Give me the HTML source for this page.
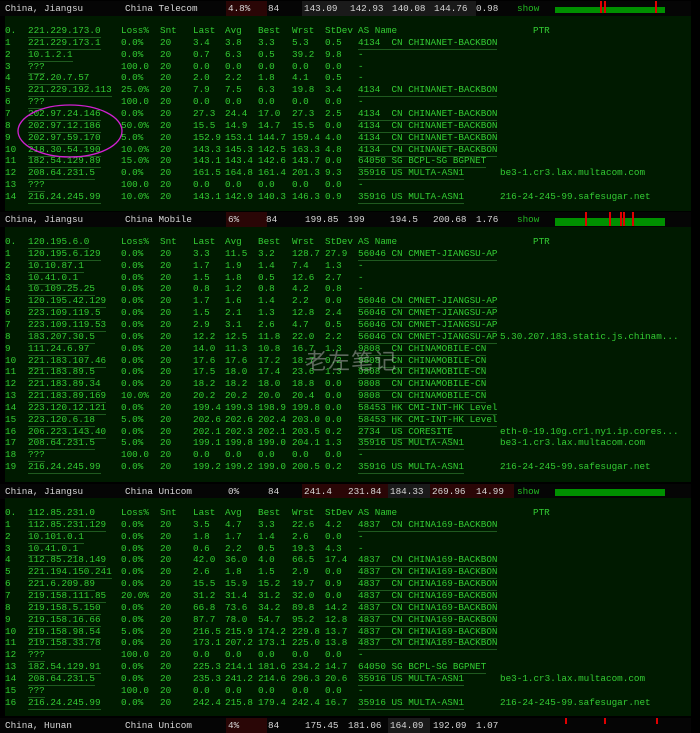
<!DOCTYPE html><html><head><meta charset="utf-8"><style>
body{margin:0;background:#000;width:700px;height:724px;overflow:hidden;position:relative;font-family:"Liberation Mono",monospace;font-size:9.3px;}
.hd{position:absolute;left:0;width:691px;height:15px;background:#050505;color:#d8d8d8;}
.hd span{position:absolute;top:0;line-height:15px;height:15px;padding-left:2px;}
.panel{position:absolute;left:5px;width:686px;background:#001a00;}
.r{position:absolute;left:0;height:12px;line-height:12px;color:#33cc33;white-space:pre;width:686px}
.r span{position:absolute;top:0}
.a{left:0}.b{left:23px}.c{left:116px}.d{left:155px}.e{left:188px}.f{left:220px}.g{left:253px}.h{left:287px}.i{left:320px}.j{left:353px}.k{left:495px}.kh{left:528px}
.u{border-bottom:1px solid #1f5a1f}
.bar{position:absolute;background:#009000;height:8px}
.tk{position:absolute;width:2px;background:#e00000}
.red{background:#2a0606}.gr{background:#1a1a1a}
</style></head><body>

<div class="hd" style="top:1px">
<span style="left:3px">China, Jiangsu</span><span style="left:123px">China Telecom</span>
<span class="red" style="left:226px;width:39px">4.8%</span><span style="left:266px">84</span>
<span class="gr" style="left:302px;width:172px">143.09</span><span style="left:348px">142.93</span><span style="left:390px">140.08</span><span style="left:432px">144.76</span>
<span style="left:474px">0.98</span><span style="left:515px;color:#22bb22">show</span>
</div>
<div class="bar" style="left:555px;top:7px;width:110px;height:6px"></div>
<div class="tk" style="left:600px;top:1px;height:12px"></div><div class="tk" style="left:604px;top:1px;height:12px"></div><div class="tk" style="left:655px;top:1px;height:12px"></div>

<div class="panel" style="top:16px;height:195px">
<div class="r" style="top:9px"><span class="a">0.</span><span class="b u">221.229.173.0</span><span class="c">Loss%</span><span class="d">Snt</span><span class="e">Last</span><span class="f">Avg</span><span class="g">Best</span><span class="h">Wrst</span><span class="i">StDev</span><span class="j">AS Name</span><span class="kh">PTR</span></div>
<div class="r" style="top:20.85px"><span class="a">1</span><span class="b u">221.229.173.1</span><span class="c">0.0%</span><span class="d">20</span><span class="e">3.4</span><span class="f">3.8</span><span class="g">3.3</span><span class="h">5.3</span><span class="i">0.5</span><span class="j u">4134  CN CHINANET-BACKBON</span></div>
<div class="r" style="top:32.7px"><span class="a">2</span><span class="b u">10.1.2.1</span><span class="c">0.0%</span><span class="d">20</span><span class="e">0.7</span><span class="f">6.3</span><span class="g">0.5</span><span class="h">39.2</span><span class="i">9.8</span><span class="j">-</span></div>
<div class="r" style="top:44.55px"><span class="a">3</span><span class="b u">???</span><span class="c">100.0</span><span class="d">20</span><span class="e">0.0</span><span class="f">0.0</span><span class="g">0.0</span><span class="h">0.0</span><span class="i">0.0</span><span class="j">-</span></div>
<div class="r" style="top:56.4px"><span class="a">4</span><span class="b u">172.20.7.57</span><span class="c">0.0%</span><span class="d">20</span><span class="e">2.0</span><span class="f">2.2</span><span class="g">1.8</span><span class="h">4.1</span><span class="i">0.5</span><span class="j">-</span></div>
<div class="r" style="top:68.25px"><span class="a">5</span><span class="b u">221.229.192.113</span><span class="c">25.0%</span><span class="d">20</span><span class="e">7.9</span><span class="f">7.5</span><span class="g">6.3</span><span class="h">19.8</span><span class="i">3.4</span><span class="j u">4134  CN CHINANET-BACKBON</span></div>
<div class="r" style="top:80.1px"><span class="a">6</span><span class="b u">???</span><span class="c">100.0</span><span class="d">20</span><span class="e">0.0</span><span class="f">0.0</span><span class="g">0.0</span><span class="h">0.0</span><span class="i">0.0</span><span class="j">-</span></div>
<div class="r" style="top:91.95px"><span class="a">7</span><span class="b u">202.97.24.146</span><span class="c">0.0%</span><span class="d">20</span><span class="e">27.3</span><span class="f">24.4</span><span class="g">17.0</span><span class="h">27.3</span><span class="i">2.5</span><span class="j u">4134  CN CHINANET-BACKBON</span></div>
<div class="r" style="top:103.8px"><span class="a">8</span><span class="b u">202.97.12.186</span><span class="c">50.0%</span><span class="d">20</span><span class="e">15.5</span><span class="f">14.9</span><span class="g">14.7</span><span class="h">15.5</span><span class="i">0.0</span><span class="j u">4134  CN CHINANET-BACKBON</span></div>
<div class="r" style="top:115.65px"><span class="a">9</span><span class="b u">202.97.59.170</span><span class="c">5.0%</span><span class="d">20</span><span class="e">152.9</span><span class="f">153.1</span><span class="g">144.7</span><span class="h">159.4</span><span class="i">4.0</span><span class="j u">4134  CN CHINANET-BACKBON</span></div>
<div class="r" style="top:127.5px"><span class="a">10</span><span class="b u">218.30.54.190</span><span class="c">10.0%</span><span class="d">20</span><span class="e">143.3</span><span class="f">145.3</span><span class="g">142.5</span><span class="h">163.3</span><span class="i">4.8</span><span class="j u">4134  CN CHINANET-BACKBON</span></div>
<div class="r" style="top:139.35px"><span class="a">11</span><span class="b u">182.54.129.89</span><span class="c">15.0%</span><span class="d">20</span><span class="e">143.1</span><span class="f">143.4</span><span class="g">142.6</span><span class="h">143.7</span><span class="i">0.0</span><span class="j u">64050 SG BCPL-SG BGPNET</span></div>
<div class="r" style="top:151.2px"><span class="a">12</span><span class="b u">208.64.231.5</span><span class="c">0.0%</span><span class="d">20</span><span class="e">161.5</span><span class="f">164.8</span><span class="g">161.4</span><span class="h">201.3</span><span class="i">9.3</span><span class="j u">35916 US MULTA-ASN1</span><span class="k">be3-1.cr3.lax.multacom.com</span></div>
<div class="r" style="top:163.05px"><span class="a">13</span><span class="b u">???</span><span class="c">100.0</span><span class="d">20</span><span class="e">0.0</span><span class="f">0.0</span><span class="g">0.0</span><span class="h">0.0</span><span class="i">0.0</span><span class="j">-</span></div>
<div class="r" style="top:174.9px"><span class="a">14</span><span class="b u">216.24.245.99</span><span class="c">10.0%</span><span class="d">20</span><span class="e">143.1</span><span class="f">142.9</span><span class="g">140.3</span><span class="h">146.3</span><span class="i">0.9</span><span class="j u">35916 US MULTA-ASN1</span><span class="k">216-24-245-99.safesugar.net</span></div>
</div>
<svg style="position:absolute;left:0;top:0" width="200" height="200"><ellipse cx="70" cy="131" rx="52" ry="26" fill="none" stroke="#d020d0" stroke-width="1.3"/></svg>

<div class="hd" style="top:212px">
<span style="left:3px">China, Jiangsu</span><span style="left:123px">China Mobile</span>
<span class="red" style="left:226px;width:39px">6%</span><span style="left:264px">84</span>
<span style="left:303px">199.85</span><span style="left:346px">199</span><span style="left:388px">194.5</span><span style="left:431px">200.68</span>
<span style="left:474px">1.76</span><span style="left:515px;color:#22bb22">show</span>
</div>
<div class="bar" style="left:555px;top:218px;width:110px"></div>
<div class="tk" style="left:585px;top:212px;height:14px"></div><div class="tk" style="left:609px;top:212px;height:14px"></div><div class="tk" style="left:620px;top:212px;height:14px"></div><div class="tk" style="left:623px;top:212px;height:14px"></div><div class="tk" style="left:632px;top:212px;height:14px"></div>

<div class="panel" style="top:227px;height:255px">
<div class="r" style="top:9px"><span class="a">0.</span><span class="b u">120.195.6.0</span><span class="c">Loss%</span><span class="d">Snt</span><span class="e">Last</span><span class="f">Avg</span><span class="g">Best</span><span class="h">Wrst</span><span class="i">StDev</span><span class="j">AS Name</span><span class="kh">PTR</span></div>
<div class="r" style="top:20.85px"><span class="a">1</span><span class="b u">120.195.6.129</span><span class="c">0.0%</span><span class="d">20</span><span class="e">3.3</span><span class="f">11.5</span><span class="g">3.2</span><span class="h">128.7</span><span class="i">27.9</span><span class="j u">56046 CN CMNET-JIANGSU-AP</span></div>
<div class="r" style="top:32.7px"><span class="a">2</span><span class="b u">10.10.87.1</span><span class="c">0.0%</span><span class="d">20</span><span class="e">1.7</span><span class="f">1.9</span><span class="g">1.4</span><span class="h">7.4</span><span class="i">1.3</span><span class="j">-</span></div>
<div class="r" style="top:44.55px"><span class="a">3</span><span class="b u">10.41.0.1</span><span class="c">0.0%</span><span class="d">20</span><span class="e">1.5</span><span class="f">1.8</span><span class="g">0.5</span><span class="h">12.6</span><span class="i">2.7</span><span class="j">-</span></div>
<div class="r" style="top:56.4px"><span class="a">4</span><span class="b u">10.109.25.25</span><span class="c">0.0%</span><span class="d">20</span><span class="e">0.8</span><span class="f">1.2</span><span class="g">0.8</span><span class="h">4.2</span><span class="i">0.8</span><span class="j">-</span></div>
<div class="r" style="top:68.25px"><span class="a">5</span><span class="b u">120.195.42.129</span><span class="c">0.0%</span><span class="d">20</span><span class="e">1.7</span><span class="f">1.6</span><span class="g">1.4</span><span class="h">2.2</span><span class="i">0.0</span><span class="j u">56046 CN CMNET-JIANGSU-AP</span></div>
<div class="r" style="top:80.1px"><span class="a">6</span><span class="b u">223.109.119.5</span><span class="c">0.0%</span><span class="d">20</span><span class="e">1.5</span><span class="f">2.1</span><span class="g">1.3</span><span class="h">12.8</span><span class="i">2.4</span><span class="j u">56046 CN CMNET-JIANGSU-AP</span></div>
<div class="r" style="top:91.95px"><span class="a">7</span><span class="b u">223.109.119.53</span><span class="c">0.0%</span><span class="d">20</span><span class="e">2.9</span><span class="f">3.1</span><span class="g">2.6</span><span class="h">4.7</span><span class="i">0.5</span><span class="j u">56046 CN CMNET-JIANGSU-AP</span></div>
<div class="r" style="top:103.8px"><span class="a">8</span><span class="b u">183.207.30.5</span><span class="c">0.0%</span><span class="d">20</span><span class="e">12.2</span><span class="f">12.5</span><span class="g">11.8</span><span class="h">22.0</span><span class="i">2.2</span><span class="j u">56046 CN CMNET-JIANGSU-AP</span><span class="k">5.30.207.183.static.js.chinam...</span></div>
<div class="r" style="top:115.65px"><span class="a">9</span><span class="b u">111.24.6.97</span><span class="c">0.0%</span><span class="d">20</span><span class="e">14.0</span><span class="f">11.3</span><span class="g">10.8</span><span class="h">16.7</span><span class="i">1.3</span><span class="j u">9808  CN CHINAMOBILE-CN</span></div>
<div class="r" style="top:127.5px"><span class="a">10</span><span class="b u">221.183.107.46</span><span class="c">0.0%</span><span class="d">20</span><span class="e">17.6</span><span class="f">17.6</span><span class="g">17.2</span><span class="h">18.7</span><span class="i">0.2</span><span class="j u">9808  CN CHINAMOBILE-CN</span></div>
<div class="r" style="top:139.35px"><span class="a">11</span><span class="b u">221.183.89.5</span><span class="c">0.0%</span><span class="d">20</span><span class="e">17.5</span><span class="f">18.0</span><span class="g">17.4</span><span class="h">23.6</span><span class="i">1.3</span><span class="j u">9808  CN CHINAMOBILE-CN</span></div>
<div class="r" style="top:151.2px"><span class="a">12</span><span class="b u">221.183.89.34</span><span class="c">0.0%</span><span class="d">20</span><span class="e">18.2</span><span class="f">18.2</span><span class="g">18.0</span><span class="h">18.8</span><span class="i">0.0</span><span class="j u">9808  CN CHINAMOBILE-CN</span></div>
<div class="r" style="top:163.05px"><span class="a">13</span><span class="b u">221.183.89.169</span><span class="c">10.0%</span><span class="d">20</span><span class="e">20.2</span><span class="f">20.2</span><span class="g">20.0</span><span class="h">20.4</span><span class="i">0.0</span><span class="j u">9808  CN CHINAMOBILE-CN</span></div>
<div class="r" style="top:174.9px"><span class="a">14</span><span class="b u">223.120.12.121</span><span class="c">0.0%</span><span class="d">20</span><span class="e">199.4</span><span class="f">199.3</span><span class="g">198.9</span><span class="h">199.8</span><span class="i">0.0</span><span class="j u">58453 HK CMI-INT-HK Level</span></div>
<div class="r" style="top:186.75px"><span class="a">15</span><span class="b u">223.120.6.18</span><span class="c">5.0%</span><span class="d">20</span><span class="e">202.6</span><span class="f">202.6</span><span class="g">202.4</span><span class="h">203.0</span><span class="i">0.0</span><span class="j u">58453 HK CMI-INT-HK Level</span></div>
<div class="r" style="top:198.6px"><span class="a">16</span><span class="b u">206.223.143.40</span><span class="c">0.0%</span><span class="d">20</span><span class="e">202.1</span><span class="f">202.3</span><span class="g">202.1</span><span class="h">203.5</span><span class="i">0.2</span><span class="j u">2734  US CORESITE</span><span class="k">eth-0-19.10g.cr1.ny1.ip.cores...</span></div>
<div class="r" style="top:210.45px"><span class="a">17</span><span class="b u">208.64.231.5</span><span class="c">5.0%</span><span class="d">20</span><span class="e">199.1</span><span class="f">199.8</span><span class="g">199.0</span><span class="h">204.1</span><span class="i">1.3</span><span class="j u">35916 US MULTA-ASN1</span><span class="k">be3-1.cr3.lax.multacom.com</span></div>
<div class="r" style="top:222.3px"><span class="a">18</span><span class="b u">???</span><span class="c">100.0</span><span class="d">20</span><span class="e">0.0</span><span class="f">0.0</span><span class="g">0.0</span><span class="h">0.0</span><span class="i">0.0</span><span class="j">-</span></div>
<div class="r" style="top:234.15px"><span class="a">19</span><span class="b u">216.24.245.99</span><span class="c">0.0%</span><span class="d">20</span><span class="e">199.2</span><span class="f">199.2</span><span class="g">199.0</span><span class="h">200.5</span><span class="i">0.2</span><span class="j u">35916 US MULTA-ASN1</span><span class="k">216-24-245-99.safesugar.net</span></div>
</div>
<div style="position:absolute;left:305px;top:344px;font-family:'Noto Sans CJK SC',sans-serif;font-size:22px;color:rgba(170,170,170,0.55);letter-spacing:1px">老左笔记</div>

<div class="hd" style="top:484px">
<span style="left:3px">China, Jiangsu</span><span style="left:123px">China Unicom</span>
<span style="left:226px">0%</span><span style="left:266px">84</span>
<span class="red" style="left:302px;width:84px">241.4</span><span style="left:346px">231.84</span><span class="gr" style="left:388px;width:40px">184.33</span><span class="red" style="left:430px;width:82px">269.96</span>
<span style="left:474px">14.99</span><span style="left:515px;color:#22bb22">show</span>
</div>
<div class="bar" style="left:555px;top:489px;width:110px;height:7px"></div>

<div class="panel" style="top:498px;height:218px">
<div class="r" style="top:9px"><span class="a">0.</span><span class="b u">112.85.231.0</span><span class="c">Loss%</span><span class="d">Snt</span><span class="e">Last</span><span class="f">Avg</span><span class="g">Best</span><span class="h">Wrst</span><span class="i">StDev</span><span class="j">AS Name</span><span class="kh">PTR</span></div>
<div class="r" style="top:20.85px"><span class="a">1</span><span class="b u">112.85.231.129</span><span class="c">0.0%</span><span class="d">20</span><span class="e">3.5</span><span class="f">4.7</span><span class="g">3.3</span><span class="h">22.6</span><span class="i">4.2</span><span class="j u">4837  CN CHINA169-BACKBON</span></div>
<div class="r" style="top:32.7px"><span class="a">2</span><span class="b u">10.101.0.1</span><span class="c">0.0%</span><span class="d">20</span><span class="e">1.8</span><span class="f">1.7</span><span class="g">1.4</span><span class="h">2.6</span><span class="i">0.0</span><span class="j">-</span></div>
<div class="r" style="top:44.55px"><span class="a">3</span><span class="b u">10.41.0.1</span><span class="c">0.0%</span><span class="d">20</span><span class="e">0.6</span><span class="f">2.2</span><span class="g">0.5</span><span class="h">19.3</span><span class="i">4.3</span><span class="j">-</span></div>
<div class="r" style="top:56.4px"><span class="a">4</span><span class="b u">112.85.218.149</span><span class="c">0.0%</span><span class="d">20</span><span class="e">42.0</span><span class="f">36.0</span><span class="g">4.0</span><span class="h">66.5</span><span class="i">17.4</span><span class="j u">4837  CN CHINA169-BACKBON</span></div>
<div class="r" style="top:68.25px"><span class="a">5</span><span class="b u">221.194.150.241</span><span class="c">0.0%</span><span class="d">20</span><span class="e">2.6</span><span class="f">1.8</span><span class="g">1.5</span><span class="h">2.9</span><span class="i">0.0</span><span class="j u">4837  CN CHINA169-BACKBON</span></div>
<div class="r" style="top:80.1px"><span class="a">6</span><span class="b u">221.6.209.89</span><span class="c">0.0%</span><span class="d">20</span><span class="e">15.5</span><span class="f">15.9</span><span class="g">15.2</span><span class="h">19.7</span><span class="i">0.9</span><span class="j u">4837  CN CHINA169-BACKBON</span></div>
<div class="r" style="top:91.95px"><span class="a">7</span><span class="b u">219.158.111.85</span><span class="c">20.0%</span><span class="d">20</span><span class="e">31.2</span><span class="f">31.4</span><span class="g">31.2</span><span class="h">32.0</span><span class="i">0.0</span><span class="j u">4837  CN CHINA169-BACKBON</span></div>
<div class="r" style="top:103.8px"><span class="a">8</span><span class="b u">219.158.5.150</span><span class="c">0.0%</span><span class="d">20</span><span class="e">66.8</span><span class="f">73.6</span><span class="g">34.2</span><span class="h">89.8</span><span class="i">14.2</span><span class="j u">4837  CN CHINA169-BACKBON</span></div>
<div class="r" style="top:115.65px"><span class="a">9</span><span class="b u">219.158.16.66</span><span class="c">0.0%</span><span class="d">20</span><span class="e">87.7</span><span class="f">78.0</span><span class="g">54.7</span><span class="h">95.2</span><span class="i">12.8</span><span class="j u">4837  CN CHINA169-BACKBON</span></div>
<div class="r" style="top:127.5px"><span class="a">10</span><span class="b u">219.158.98.54</span><span class="c">5.0%</span><span class="d">20</span><span class="e">216.5</span><span class="f">215.9</span><span class="g">174.2</span><span class="h">229.8</span><span class="i">13.7</span><span class="j u">4837  CN CHINA169-BACKBON</span></div>
<div class="r" style="top:139.35px"><span class="a">11</span><span class="b u">219.158.33.78</span><span class="c">0.0%</span><span class="d">20</span><span class="e">173.1</span><span class="f">207.2</span><span class="g">173.1</span><span class="h">225.0</span><span class="i">13.8</span><span class="j u">4837  CN CHINA169-BACKBON</span></div>
<div class="r" style="top:151.2px"><span class="a">12</span><span class="b u">???</span><span class="c">100.0</span><span class="d">20</span><span class="e">0.0</span><span class="f">0.0</span><span class="g">0.0</span><span class="h">0.0</span><span class="i">0.0</span><span class="j">-</span></div>
<div class="r" style="top:163.05px"><span class="a">13</span><span class="b u">182.54.129.91</span><span class="c">0.0%</span><span class="d">20</span><span class="e">225.3</span><span class="f">214.1</span><span class="g">181.6</span><span class="h">234.2</span><span class="i">14.7</span><span class="j u">64050 SG BCPL-SG BGPNET</span></div>
<div class="r" style="top:174.9px"><span class="a">14</span><span class="b u">208.64.231.5</span><span class="c">0.0%</span><span class="d">20</span><span class="e">235.3</span><span class="f">241.2</span><span class="g">214.6</span><span class="h">296.3</span><span class="i">20.6</span><span class="j u">35916 US MULTA-ASN1</span><span class="k">be3-1.cr3.lax.multacom.com</span></div>
<div class="r" style="top:186.75px"><span class="a">15</span><span class="b u">???</span><span class="c">100.0</span><span class="d">20</span><span class="e">0.0</span><span class="f">0.0</span><span class="g">0.0</span><span class="h">0.0</span><span class="i">0.0</span><span class="j">-</span></div>
<div class="r" style="top:198.6px"><span class="a">16</span><span class="b u">216.24.245.99</span><span class="c">0.0%</span><span class="d">20</span><span class="e">242.4</span><span class="f">215.8</span><span class="g">179.4</span><span class="h">242.4</span><span class="i">16.7</span><span class="j u">35916 US MULTA-ASN1</span><span class="k">216-24-245-99.safesugar.net</span></div>
</div>

<div class="hd" style="top:718px">
<span style="left:3px">China, Hunan</span><span style="left:123px">China Unicom</span>
<span class="red" style="left:226px;width:39px">4%</span><span style="left:266px">84</span>
<span style="left:303px">175.45</span><span style="left:346px">181.06</span><span class="gr" style="left:388px;width:40px">164.09</span><span style="left:431px">192.09</span><span style="left:474px">1.07</span>
</div>
<div class="tk" style="left:565px;top:718px;height:6px"></div><div class="tk" style="left:604px;top:718px;height:6px"></div><div class="tk" style="left:656px;top:718px;height:6px"></div>
</body></html>
